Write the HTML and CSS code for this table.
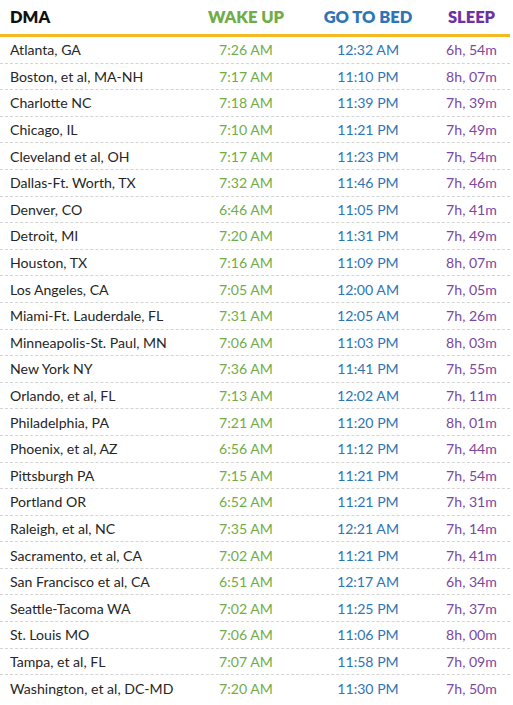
FILE: index.html
```html
<!DOCTYPE html>
<html>
<head>
<meta charset="utf-8">
<link rel="stylesheet" href="styles.css">
</head>
<body>
<div class="table">
  <div class="row head">
    <div class="c dma">DMA</div>
    <div class="c wake">WAKE UP</div>
    <div class="c bed">GO TO BED</div>
    <div class="c sleep">SLEEP</div>
  </div>
  <div class="row"><div class="c dma">Atlanta, GA</div><div class="c wake">7:26 AM</div><div class="c bed">12:32 AM</div><div class="c sleep">6h, 54m</div></div>
  <div class="row"><div class="c dma">Boston, et al, MA-NH</div><div class="c wake">7:17 AM</div><div class="c bed">11:10 PM</div><div class="c sleep">8h, 07m</div></div>
  <div class="row"><div class="c dma">Charlotte NC</div><div class="c wake">7:18 AM</div><div class="c bed">11:39 PM</div><div class="c sleep">7h, 39m</div></div>
  <div class="row"><div class="c dma">Chicago, IL</div><div class="c wake">7:10 AM</div><div class="c bed">11:21 PM</div><div class="c sleep">7h, 49m</div></div>
  <div class="row"><div class="c dma">Cleveland et al, OH</div><div class="c wake">7:17 AM</div><div class="c bed">11:23 PM</div><div class="c sleep">7h, 54m</div></div>
  <div class="row"><div class="c dma">Dallas-Ft. Worth, TX</div><div class="c wake">7:32 AM</div><div class="c bed">11:46 PM</div><div class="c sleep">7h, 46m</div></div>
  <div class="row"><div class="c dma">Denver, CO</div><div class="c wake">6:46 AM</div><div class="c bed">11:05 PM</div><div class="c sleep">7h, 41m</div></div>
  <div class="row"><div class="c dma">Detroit, MI</div><div class="c wake">7:20 AM</div><div class="c bed">11:31 PM</div><div class="c sleep">7h, 49m</div></div>
  <div class="row"><div class="c dma">Houston, TX</div><div class="c wake">7:16 AM</div><div class="c bed">11:09 PM</div><div class="c sleep">8h, 07m</div></div>
  <div class="row"><div class="c dma">Los Angeles, CA</div><div class="c wake">7:05 AM</div><div class="c bed">12:00 AM</div><div class="c sleep">7h, 05m</div></div>
  <div class="row"><div class="c dma">Miami-Ft. Lauderdale, FL</div><div class="c wake">7:31 AM</div><div class="c bed">12:05 AM</div><div class="c sleep">7h, 26m</div></div>
  <div class="row"><div class="c dma">Minneapolis-St. Paul, MN</div><div class="c wake">7:06 AM</div><div class="c bed">11:03 PM</div><div class="c sleep">8h, 03m</div></div>
  <div class="row"><div class="c dma">New York NY</div><div class="c wake">7:36 AM</div><div class="c bed">11:41 PM</div><div class="c sleep">7h, 55m</div></div>
  <div class="row"><div class="c dma">Orlando, et al, FL</div><div class="c wake">7:13 AM</div><div class="c bed">12:02 AM</div><div class="c sleep">7h, 11m</div></div>
  <div class="row"><div class="c dma">Philadelphia, PA</div><div class="c wake">7:21 AM</div><div class="c bed">11:20 PM</div><div class="c sleep">8h, 01m</div></div>
  <div class="row"><div class="c dma">Phoenix, et al, AZ</div><div class="c wake">6:56 AM</div><div class="c bed">11:12 PM</div><div class="c sleep">7h, 44m</div></div>
  <div class="row"><div class="c dma">Pittsburgh PA</div><div class="c wake">7:15 AM</div><div class="c bed">11:21 PM</div><div class="c sleep">7h, 54m</div></div>
  <div class="row"><div class="c dma">Portland OR</div><div class="c wake">6:52 AM</div><div class="c bed">11:21 PM</div><div class="c sleep">7h, 31m</div></div>
  <div class="row"><div class="c dma">Raleigh, et al, NC</div><div class="c wake">7:35 AM</div><div class="c bed">12:21 AM</div><div class="c sleep">7h, 14m</div></div>
  <div class="row"><div class="c dma">Sacramento, et al, CA</div><div class="c wake">7:02 AM</div><div class="c bed">11:21 PM</div><div class="c sleep">7h, 41m</div></div>
  <div class="row"><div class="c dma">San Francisco et al, CA</div><div class="c wake">6:51 AM</div><div class="c bed">12:17 AM</div><div class="c sleep">6h, 34m</div></div>
  <div class="row"><div class="c dma">Seattle-Tacoma WA</div><div class="c wake">7:02 AM</div><div class="c bed">11:25 PM</div><div class="c sleep">7h, 37m</div></div>
  <div class="row"><div class="c dma">St. Louis MO</div><div class="c wake">7:06 AM</div><div class="c bed">11:06 PM</div><div class="c sleep">8h, 00m</div></div>
  <div class="row"><div class="c dma">Tampa, et al, FL</div><div class="c wake">7:07 AM</div><div class="c bed">11:58 PM</div><div class="c sleep">7h, 09m</div></div>
  <div class="row"><div class="c dma">Washington, et al, DC-MD</div><div class="c wake">7:20 AM</div><div class="c bed">11:30 PM</div><div class="c sleep">7h, 50m</div></div>
</div>
</body>
</html>
```
FILE: styles.css
```css
html, body {
  margin: 0;
  padding: 0;
  background: #ffffff;
}
body {
  font-family: "Lato", "Open Sans", sans-serif;
  font-size: 14.1px;
  color: #262626;
}
.table {
  width: 510px;
}
.row {
  display: grid;
  grid-template-columns: 185px 122px 122px 81px;
  align-items: center;
  height: 25.6px;
  border-bottom: 1px dashed #d4d4d4;
}
.row:last-child {
  border-bottom: none;
}
.row.head {
  height: 34px;
  border-bottom: 3px solid #f5b922;
  font-weight: 800;
  font-size: 16.5px;
}
.c {
  text-align: center;
  white-space: nowrap;
}
.c.dma {
  text-align: left;
  padding-left: 10px;
}
.c.sleep {
  padding-left: 4px;
}
.head .dma { color: #111111; }
.wake { color: #70ad47; }
.bed { color: #2e75b6; }
.sleep { color: #7030a0; }
.row:not(.head) .sleep { color: #7a479f; }
```
